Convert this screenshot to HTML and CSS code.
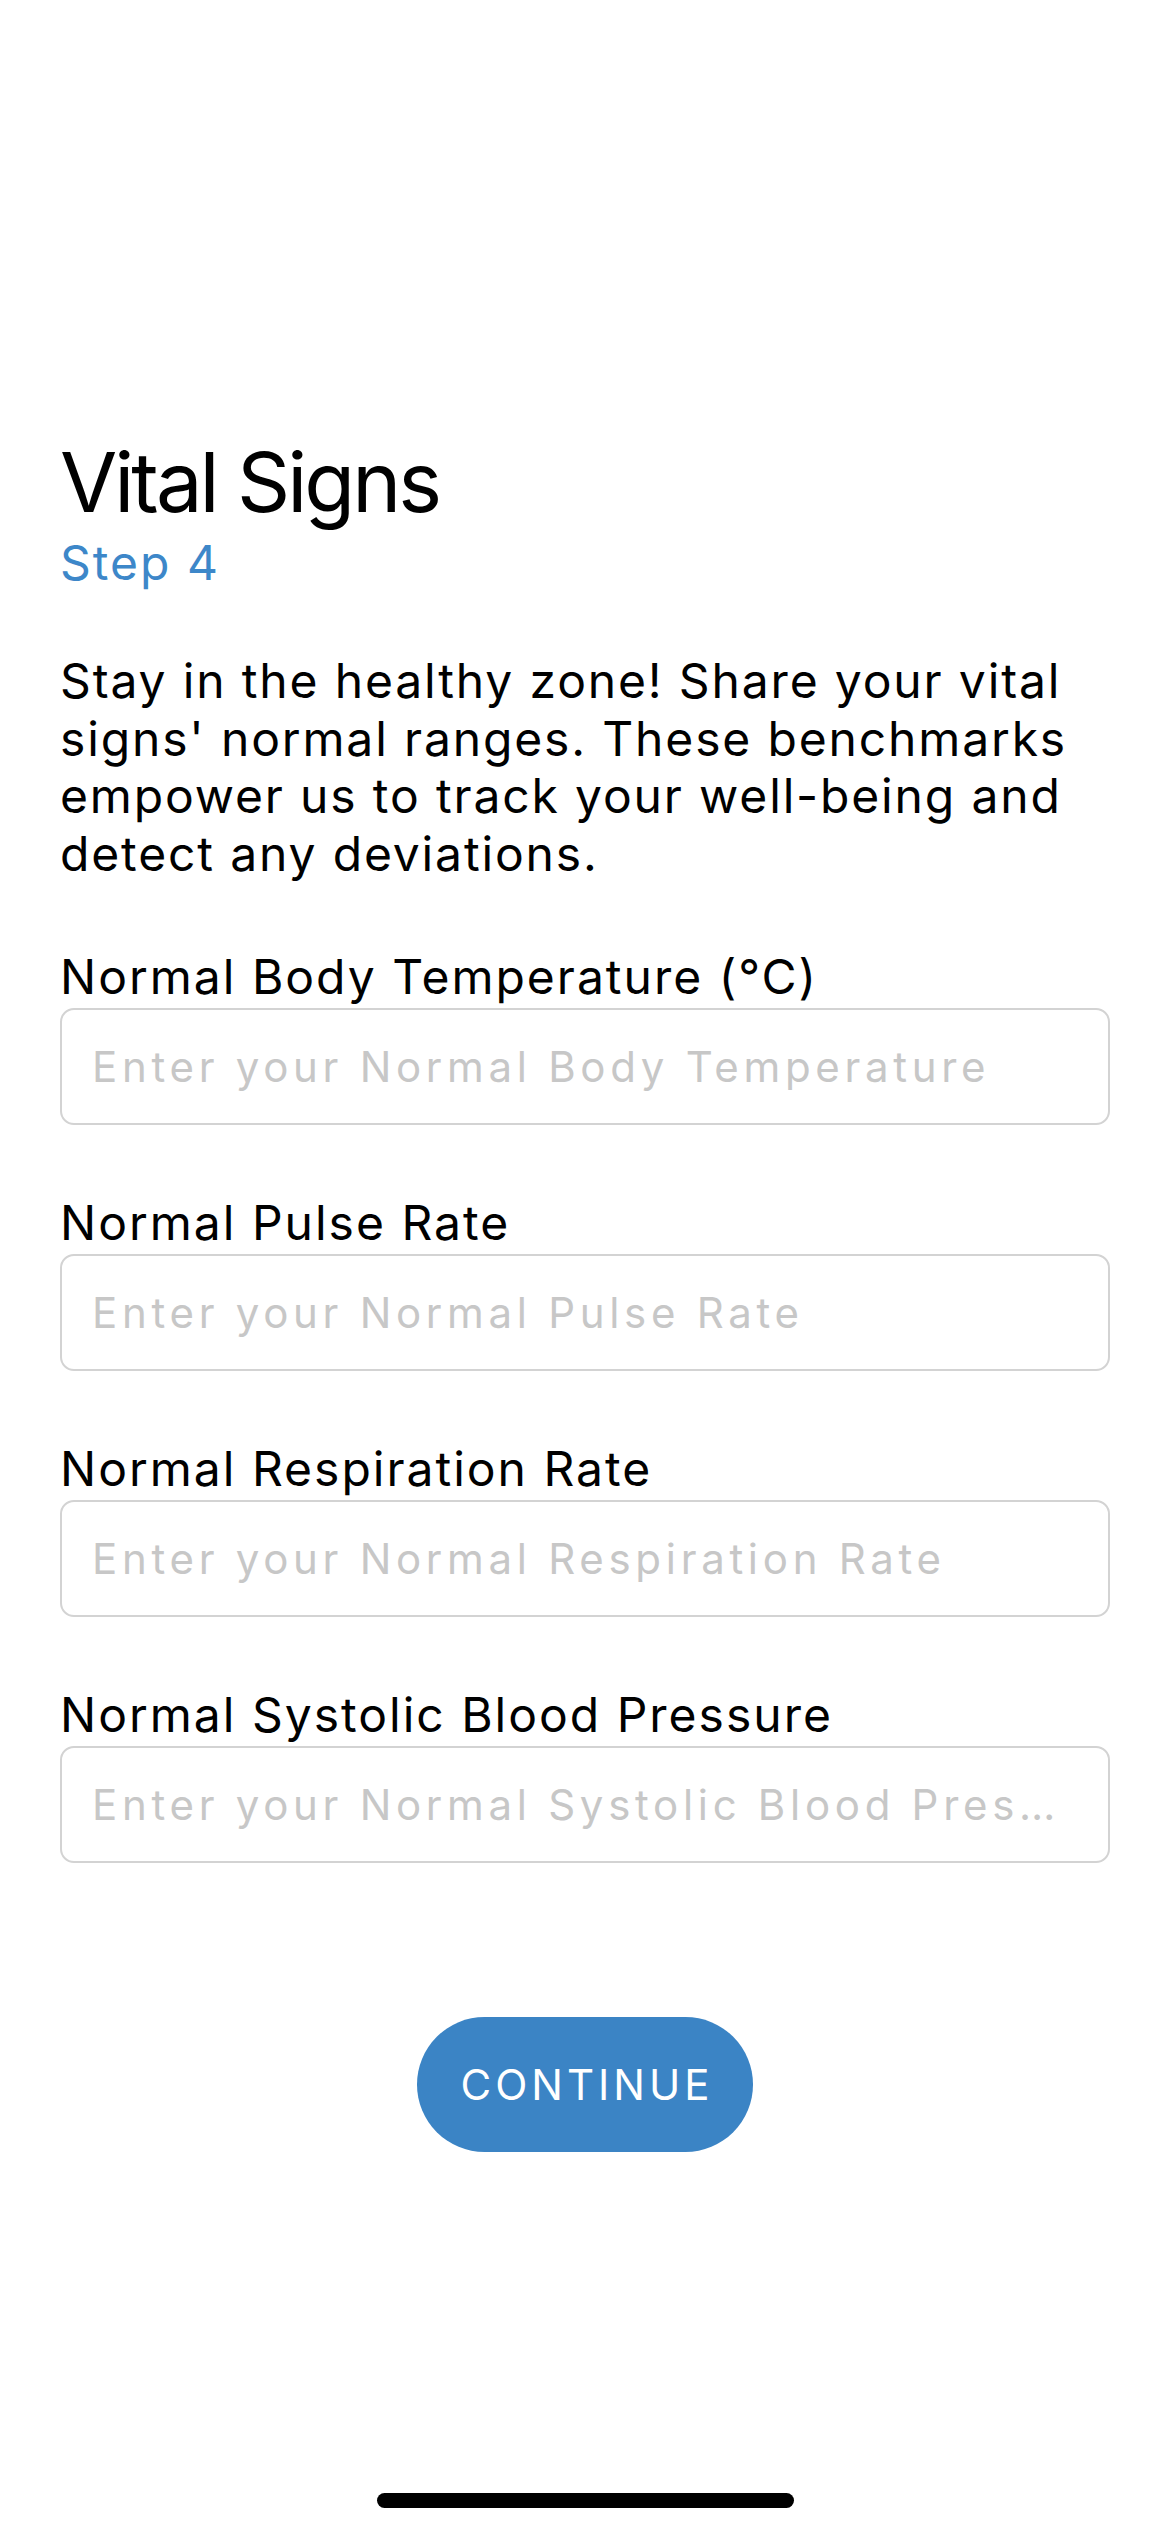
FILE: index.html
```html
<!DOCTYPE html>
<html lang="en">
<head>
<meta charset="utf-8">
<title>Vital Signs</title>
<link rel="stylesheet" href="styles.css">
</head>
<body>
<div class="screen">
  <main class="content">
    <header class="heading">
      <h1 class="title">Vital Signs</h1>
      <p class="step">Step 4</p>
    </header>
    <p class="intro">Stay in the healthy zone! Share your vital signs' normal ranges. These benchmarks empower us to track your well-being and detect any deviations.</p>
    <form class="fields">
      <label class="field">
        <span class="field-label">Normal Body Temperature (°C)</span>
        <input class="field-input" type="text" placeholder="Enter your Normal Body Temperature">
      </label>
      <label class="field">
        <span class="field-label">Normal Pulse Rate</span>
        <input class="field-input" type="text" placeholder="Enter your Normal Pulse Rate">
      </label>
      <label class="field">
        <span class="field-label">Normal Respiration Rate</span>
        <input class="field-input" type="text" placeholder="Enter your Normal Respiration Rate">
      </label>
      <label class="field">
        <span class="field-label">Normal Systolic Blood Pressure</span>
        <input class="field-input" type="text" placeholder="Enter your Normal Systolic Blood Pressure">
      </label>
    </form>
    <div class="actions">
      <button class="continue" type="button">CONTINUE</button>
    </div>
  </main>
  <div class="home-bar"><span class="home-indicator"></span></div>
</div>
</body>
</html>
```

FILE: styles.css
```css
* {
  box-sizing: border-box;
}

html,
body {
  margin: 0;
  padding: 0;
  background: #ffffff;
}

body {
  font-family: Inter, "Noto Sans", "Liberation Sans", sans-serif;
  color: #000000;
}

.screen {
  width: 1170px;
  min-height: 2532px;
  display: flex;
  flex-direction: column;
}

.content {
  padding: 432px 60px 0 60px;
  display: flex;
  flex-direction: column;
}

.heading {
  display: flex;
  flex-direction: column;
}

.title {
  margin: 0;
  font-size: 83px;
  line-height: 100px;
  font-weight: 400;
  letter-spacing: -3px;
}

.step {
  margin: 0;
  font-size: 48px;
  line-height: 61px;
  color: #3d87c9;
  letter-spacing: 2px;
}

.intro {
  margin: 59px 0 0 0;
  font-size: 48px;
  line-height: 57.5px;
  letter-spacing: 1.85px;
}

.fields {
  margin: 66px 0 0 0;
  display: flex;
  flex-direction: column;
  gap: 69.5px;
}

.field {
  display: flex;
  flex-direction: column;
  gap: 1.5px;
}

.field-label {
  font-size: 48px;
  line-height: 58px;
  letter-spacing: 2px;
}

.field-input {
  width: 100%;
  height: 117px;
  margin: 0;
  padding: 0 32px 0 30px;
  border: 2px solid #d3d3d3;
  border-radius: 14px;
  background: #ffffff;
  font-family: Inter, "Noto Sans", "Liberation Sans", sans-serif;
  font-size: 42px;
  letter-spacing: 4.7px;
  color: #000000;
  outline: none;
  text-overflow: ellipsis;
}

.field-input::placeholder {
  color: #c7c7c7;
  opacity: 1;
}

.actions {
  margin-top: 154px;
  display: flex;
  justify-content: center;
}

.continue {
  width: 336px;
  height: 135px;
  padding: 0;
  border: none;
  border-radius: 68px;
  background: #3b84c5;
  color: #ffffff;
  font-family: Inter, "Noto Sans", "Liberation Sans", sans-serif;
  font-size: 42px;
  letter-spacing: 4px;
  text-indent: 4px;
}

.home-bar {
  margin-top: auto;
  padding-bottom: 24px;
  display: flex;
  justify-content: center;
}

.home-indicator {
  display: block;
  width: 417px;
  height: 15px;
  border-radius: 8px;
  background: #000000;
}
```
